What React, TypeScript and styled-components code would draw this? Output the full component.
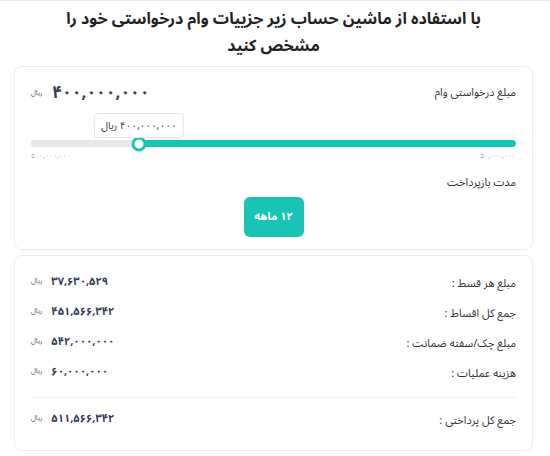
import React from "react";
import styled, { createGlobalStyle } from "styled-components";

const Global = createGlobalStyle`
  html, body { margin: 0; padding: 0; background: #fff; }
  body { font-family: "Noto Sans Arabic", "Noto Naskh Arabic", "DejaVu Sans", sans-serif; color: #333; }
`;

const Page = styled.div`
  direction: rtl;
  border-top: 1px solid #e6e8eb;
  padding: 0 17px 6px 14px;
  display: flex;
  flex-direction: column;
`;

const Title = styled.h1`
  margin: 0;
  padding: 5px 0 6px;
  text-align: center;
  font-size: 16px;
  font-weight: 700;
  line-height: 27px;
  color: #222;
`;

const Card = styled.section<{ $pt: number; $pb: number }>`
  border: 1px solid #ebedef;
  border-radius: 8px;
  padding: ${(p) => p.$pt}px 16px ${(p) => p.$pb}px;
  display: flex;
  flex-direction: column;
  & + & { margin-top: 5px; }
`;

const HeadRow = styled.div`
  display: flex;
  align-items: center;
  justify-content: space-between;
  height: 20px;
`;

const Label = styled.span`
  font-size: 11px;
  line-height: 16px;
  color: #333;
`;

const Amount = styled.div<{ $size: number; $lift?: number }>`
  display: flex;
  align-items: center;
  gap: ${(p) => (p.$size > 14 ? 10 : 9)}px;
  color: #363f54;
  font-weight: 700;
  font-size: ${(p) => p.$size}px;
  line-height: ${(p) => p.$size + 4}px;
  padding-bottom: ${(p) => p.$lift ?? 0}px;
`;

const Unit = styled.span`
  font-size: 7px;
  line-height: 10px;
  font-weight: 400;
  color: #555c6b;
`;

const SliderBox = styled.div`
  position: relative;
  margin-top: 37px;
  height: 7px;
`;

const Track = styled.div`
  height: 7px;
  border-radius: 4px;
  background: #e4e8e9;
  position: relative;
  overflow: hidden;
`;

const Fill = styled.div`
  position: absolute;
  top: 0;
  bottom: 0;
  right: 0;
  background: #19c4b4;
  border-radius: 4px;
`;

const Thumb = styled.div`
  position: absolute;
  top: 50%;
  width: 9px;
  height: 9px;
  border: 3px solid #19c4b4;
  border-radius: 50%;
  background: #fff;
  transform: translate(50%, -50%);
`;

const Tip = styled.div`
  position: absolute;
  bottom: 9px;
  transform: translateX(50%);
  height: 23px;
  padding: 0 6px;
  display: flex;
  align-items: center;
  white-space: nowrap;
  background: #fff;
  border: 1px solid #e3e5e8;
  border-radius: 4px;
  font-size: 10px;
  line-height: 14px;
  color: #333;
`;

const Ends = styled.div`
  display: flex;
  justify-content: space-between;
  margin-top: 4px;
  font-size: 7px;
  line-height: 10px;
  color: #9aa0a8;
`;

const SubLabel = styled(Label)`
  margin-top: 14px;
`;

const Chip = styled.button`
  align-self: center;
  margin-top: 6px;
  width: 60px;
  height: 40px;
  border: none;
  border-radius: 6px;
  background: #19c4b4;
  color: #fff;
  font-family: inherit;
  font-weight: 700;
  font-size: 11px;
  line-height: 16px;
`;

const Row = styled.div`
  display: flex;
  align-items: center;
  justify-content: space-between;
  height: 30px;
`;

const Divider = styled.hr`
  border: none;
  border-top: 1px solid #eef0f2;
  margin: 8px 0 8px;
`;

const rows = [
  ["مبلغ هر قسط :", "۳۷,۶۳۰,۵۲۹"],
  ["جمع کل اقساط :", "۴۵۱,۵۶۶,۳۴۲"],
  ["مبلغ چک/سفته ضمانت :", "۵۴۲,۰۰۰,۰۰۰"],
  ["هزینه عملیات :", "۶۰,۰۰۰,۰۰۰"],
];

export default function App() {
  const min = 50, max = 500, value = 400;
  const pct = ((value - min) / (max - min)) * 100;
  return (
    <>
      <Global />
      <Page>
        <Title>
          با استفاده از ماشین حساب زیر جزییات وام درخواستی خود را
          <br />
          مشخص کنید
        </Title>
        <Card $pt={16} $pb={12}>
          <HeadRow>
            <Label>مبلغ درخواستی وام</Label>
            <Amount $size={17}>
              <span>۴۰۰,۰۰۰,۰۰۰</span>
              <Unit>ریال</Unit>
            </Amount>
          </HeadRow>
          <SliderBox>
            <Track>
              <Fill style={{ width: `${pct}%` }} />
            </Track>
            <Thumb style={{ right: `${pct}%` }} />
            <Tip style={{ right: `${pct}%` }}>۴۰۰,۰۰۰,۰۰۰ ریال</Tip>
          </SliderBox>
          <Ends>
            <span>۵۰,۰۰۰,۰۰۰</span>
            <span>۵۰۰,۰۰۰,۰۰۰</span>
          </Ends>
          <SubLabel>مدت بازپرداخت</SubLabel>
          <Chip>۱۲ ماهه</Chip>
        </Card>
        <Card $pt={13} $pb={14}>
          {rows.map(([l, v]) => (
            <Row key={l}>
              <Label>{l}</Label>
              <Amount $size={11} $lift={6}>
                <span>{v}</span>
                <Unit>ریال</Unit>
              </Amount>
            </Row>
          ))}
          <Divider />
          <Row>
            <Label>جمع کل پرداختی :</Label>
            <Amount $size={11} $lift={6}>
              <span>۵۱۱,۵۶۶,۳۴۲</span>
              <Unit>ریال</Unit>
            </Amount>
          </Row>
        </Card>
      </Page>
    </>
  );
}
